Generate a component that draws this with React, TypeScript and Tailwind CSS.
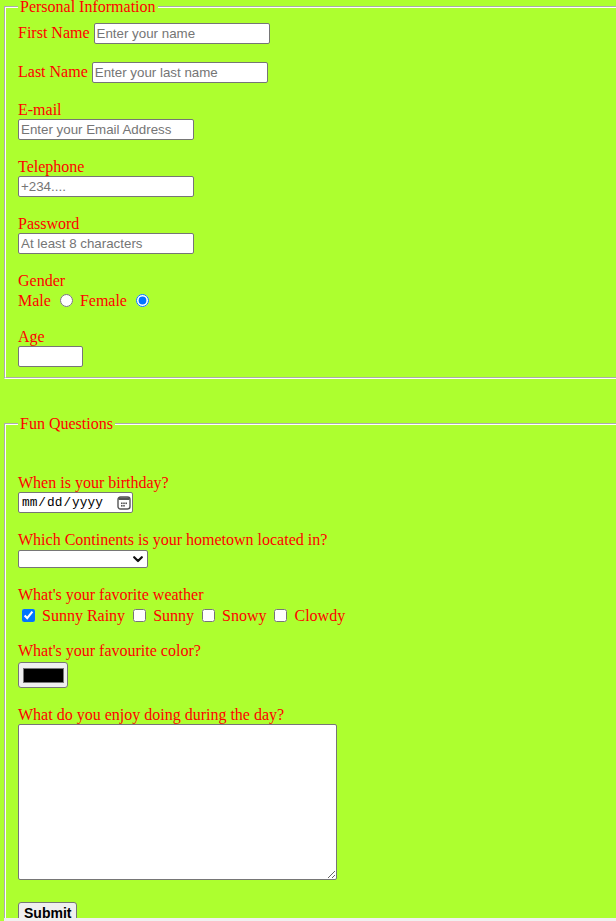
import React from "react";

const label = "font-['Liberation_Serif',serif] text-[16px] leading-[18px] text-[#ff0000] whitespace-nowrap";
const textInput =
  "h-[21px] w-[176px] border border-[#767676] rounded-[2px] bg-white px-[2px] font-['Liberation_Sans',sans-serif] text-[13.33px] text-black placeholder:text-[#757575] outline-none";

export default function App() {
  return (
    <div className="relative w-[616px] h-[921px] overflow-hidden bg-[#adff2f] font-['Liberation_Serif',serif]">
      <div className="-mt-[2px] pl-[4px] flex flex-col items-start">
        {/* Personal Information */}
        <fieldset className="w-[700px] border-2 [border-style:groove] border-white px-[12px] pt-[7px] pb-[10px]">
          <legend className={`px-[2px] ${label}`}>Personal Information</legend>
          <div className="flex flex-col items-start">
            <div className="flex items-baseline h-[21px]">
              <label className={label}>First Name</label>
              <input className={`ml-[4px] ${textInput}`} placeholder="Enter your name" />
            </div>
            <div className="flex items-baseline h-[21px] mt-[18px]">
              <label className={label}>Last Name</label>
              <input className={`ml-[4px] ${textInput}`} placeholder="Enter your last name" />
            </div>
            <label className={`mt-[18px] ${label}`}>E-mail</label>
            <input className={textInput} placeholder="Enter your Email Address" />
            <label className={`mt-[18px] ${label}`}>Telephone</label>
            <input className={textInput} placeholder="+234...." />
            <label className={`mt-[18px] ${label}`}>Password</label>
            <input type="password" className={textInput} placeholder="At least 8 characters" />
            <label className={`mt-[18px] ${label}`}>Gender</label>
            <div className="flex items-start h-[20px]">
              <span className={`mt-[2px] ${label}`}>Male</span>
              <input type="radio" name="gender" className="mt-[4px] ml-[9px] w-[13px] h-[13px]" />
              <span className={`mt-[2px] ml-[7px] ${label}`}>Female</span>
              <input type="radio" name="gender" defaultChecked className="mt-[4px] ml-[9px] w-[13px] h-[13px]" />
            </div>
            <label className={`mt-[18px] ${label}`}>Age</label>
            <input type="number" className={`${textInput} !w-[65px]`} />
          </div>
        </fieldset>

        {/* Fun Questions */}
        <fieldset className="mt-[36px] w-[700px] border-2 [border-style:groove] border-white px-[12px] pt-[41px] pb-[10px]">
          <legend className={`px-[2px] ${label}`}>Fun Questions</legend>
          <div className="flex flex-col items-start">
            <label className={label}>When is your birthday?</label>
            <div className="relative">
              <input
                type="date"
                className="block h-[21px] w-[115px] border border-[#767676] rounded-[2px] bg-white px-[2px] font-['Liberation_Mono',monospace] text-[12.8px] text-black outline-none [&::-webkit-calendar-picker-indicator]:opacity-0"
              />
              <svg
                className="pointer-events-none absolute left-[99px] top-[4px]"
                width="14"
                height="14"
                viewBox="0 0 14 14"
                fill="none"
              >
                <rect x="1" y="1" width="12" height="12" rx="2.5" stroke="#555" strokeWidth="1.4" />
                <rect x="1.5" y="1.5" width="11" height="2.5" fill="#555" />
                <rect x="4" y="6.5" width="1.6" height="1.6" fill="#555" />
                <rect x="6.2" y="6.5" width="1.6" height="1.6" fill="#555" />
                <rect x="8.4" y="6.5" width="1.6" height="1.6" fill="#555" />
                <rect x="4" y="9" width="1.6" height="1.6" fill="#555" />
                <rect x="6.2" y="9" width="1.6" height="1.6" fill="#555" />
              </svg>
            </div>
            <label className={`mt-[18px] ${label}`}>Which Continents is your hometown located in?</label>
            <div className="relative mt-[1px]">
              <select className="appearance-none block h-[18px] w-[130px] border border-[#767676] rounded-[2px] bg-white font-['Liberation_Sans',sans-serif] text-[13.33px] text-black outline-none">
                <option value=""></option>
                <option>Africa</option>
                <option>Asia</option>
                <option>Europe</option>
                <option>North America</option>
                <option>South America</option>
                <option>Australia</option>
                <option>Antarctica</option>
              </select>
              <svg
                className="pointer-events-none absolute left-[115px] top-[6px]"
                width="10"
                height="7"
                viewBox="0 0 10 7"
                fill="none"
              >
                <path d="M1.2 1.2 L5 5 L8.8 1.2" stroke="#111" strokeWidth="2.2" strokeLinecap="round" strokeLinejoin="round" />
              </svg>
            </div>
            <label className={`mt-[18px] ${label}`}>What's your favorite weather</label>
            <div className="flex items-start h-[20px]">
              <input type="checkbox" defaultChecked className="mt-[5px] ml-[4px] w-[13px] h-[13px]" />
              <span className={`mt-[3px] ml-[7px] ${label}`}>Sunny Rainy</span>
              <input type="checkbox" className="mt-[5px] ml-[8px] w-[13px] h-[13px]" />
              <span className={`mt-[3px] ml-[7px] ${label}`}>Sunny</span>
              <input type="checkbox" className="mt-[5px] ml-[8px] w-[13px] h-[13px]" />
              <span className={`mt-[3px] ml-[7px] ${label}`}>Snowy</span>
              <input type="checkbox" className="mt-[5px] ml-[8px] w-[13px] h-[13px]" />
              <span className={`mt-[3px] ml-[7px] ${label}`}>Clowdy</span>
            </div>
            <label className={`mt-[18px] ${label}`}>What's your favourite color?</label>
            <div className="mt-[2px] w-[50px] h-[26px] border border-[#767676] rounded-[3px] bg-[#efefef] flex items-center justify-center">
              <div className="w-[41px] h-[15px] bg-black border border-[#777777]" />
            </div>
            <label className={`mt-[18px] ${label}`}>What do you enjoy doing during the day?</label>
            <textarea className="block w-[319px] h-[156px] border border-[#767676] rounded-[2px] bg-white resize font-['Liberation_Mono',monospace] text-[13.33px] outline-none" />
            <button className="mt-[22px] h-[22px] px-[5px] border border-[#767676] rounded-[3px] bg-[#efefef] font-['Liberation_Sans',sans-serif] text-[14px] font-bold text-black leading-[18px]">
              Submit
            </button>
          </div>
        </fieldset>
      </div>
      <div className="absolute left-[4px] right-0 bottom-0 h-[3px] bg-[#f0f0f0]" />
    </div>
  );
}
